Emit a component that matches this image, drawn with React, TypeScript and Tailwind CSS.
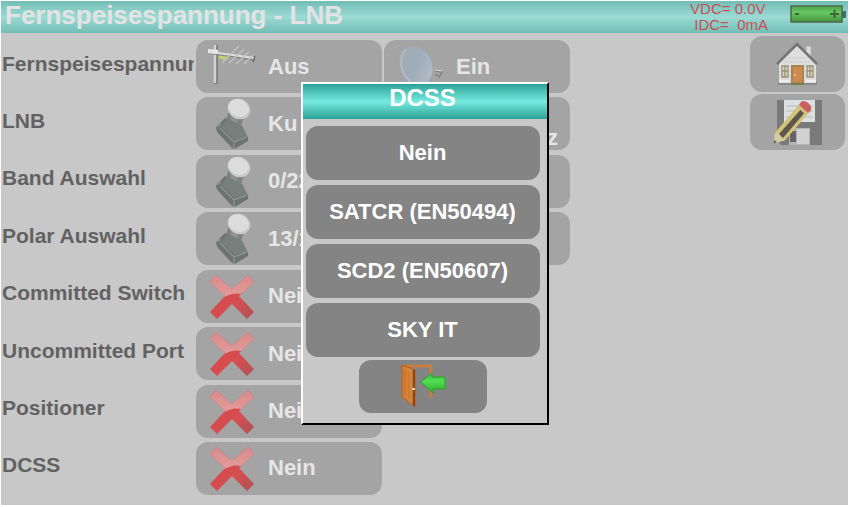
import React from "react";

type IconName = "antenna" | "dish" | "lnb" | "cross";

interface Choice {
  icon?: IconName;
  text: string;
  corner?: boolean;
}

interface SettingRow {
  label: string;
  choices: Choice[];
}

const rows: SettingRow[] = [
  { label: "Fernspeisespannung", choices: [{ icon: "antenna", text: "Aus" }, { icon: "dish", text: "Ein" }] },
  { label: "LNB", choices: [{ icon: "lnb", text: "Ku" }, { text: "GHz", corner: true }] },
  { label: "Band Auswahl", choices: [{ icon: "lnb", text: "0/22" }, { text: "" }] },
  { label: "Polar Auswahl", choices: [{ icon: "lnb", text: "13/18" }, { text: "" }] },
  { label: "Committed Switch", choices: [{ icon: "cross", text: "Nein" }] },
  { label: "Uncommitted Port", choices: [{ icon: "cross", text: "Nein" }] },
  { label: "Positioner", choices: [{ icon: "cross", text: "Nein" }] },
  { label: "DCSS", choices: [{ icon: "cross", text: "Nein" }] },
];

const dcssOptions = ["Nein", "SATCR (EN50494)", "SCD2 (EN50607)", "SKY IT"];

const AntennaIcon = () => (
  <svg className="h-[53px] w-[72px]" viewBox="0 0 72 53" fill="none">
    <path d="M20 5V44" stroke="#7c7c7c" strokeWidth="4" />
    <path d="M19 5V43" stroke="#d4d4d4" strokeWidth="2.4" />
    <path d="M24 14L32 16L28 20L22 18Z" fill="#c9cc62" />
    <path d="M14 13L59 20" stroke="#8a8a8a" strokeWidth="2" />
    <path d="M14 12L59 18" stroke="#dedede" strokeWidth="2" />
    <path d="M12 11L22 12" stroke="#e4e6ea" strokeWidth="4" />
    <path d="M43 6L26 23M48 9L33 23M53 12L40 24M57 15L48 24" stroke="#c4c4c4" strokeWidth="1.2" />
    <path d="M59 16L57 22" stroke="#6e6e6e" strokeWidth="1.6" />
  </svg>
);

const DishIcon = () => (
  <svg className="h-[53px] w-[72px]" viewBox="0 0 72 53" fill="none">
    <defs>
      <linearGradient id="dish" x1="0" y1="0" x2="1" y2="1">
        <stop offset="0" stopColor="#a3adb6" />
        <stop offset=".5" stopColor="#9facba" />
        <stop offset="1" stopColor="#b9c1ce" />
      </linearGradient>
    </defs>
    <ellipse cx="32" cy="26" rx="16" ry="20" transform="rotate(-20 32 26)" fill="url(#dish)" />
    <path d="M22 9C13 17 16 36 31 45" stroke="#bcc3ca" strokeWidth="1.2" />
    <path d="M51 31L58 32L55 38M51 35L55 36" stroke="#808488" strokeWidth="1.4" />
    <path d="M51 30L58 31" stroke="#d9dcdf" strokeWidth="1.2" />
    <path d="M32 46L52 43" stroke="#c6c9cc" strokeWidth="1.5" />
  </svg>
);

const LnbIcon = () => (
  <svg className="h-[53px] w-[72px]" viewBox="0 0 72 53" fill="none">
    <path d="M33 14L29 26L44 32L48 20Z" fill="#7d8180" />
    <path d="M36 18L33 27L40 29L43 20Z" fill="#8d9190" />
    <path d="M29 21L20 30Q20 34 23 37L35 50Q38 53 42 50L52 44Q53 41 50 37L46 29Z" fill="#6c7472" />
    <path d="M31 22L25 30L39 43L51 39L46 29Z" fill="#777f7d" />
    <path d="M24 31L38 45L51 40" stroke="#8c9492" strokeWidth="1.4" />
    <path d="M38 46V51M21 30L25 27" stroke="#929a98" strokeWidth="1.2" />
    <ellipse cx="43" cy="12" rx="11.500" ry="10" transform="rotate(24 43 12)" fill="#c9cbcb" />
    <ellipse cx="42.500" cy="11" rx="10.500" ry="8.500" transform="rotate(24 42.500 11)" fill="#dcdcdc" />
  </svg>
);

const CrossIcon = () => (
  <svg className="h-[53px] w-[72px]" viewBox="0 0 72 53" fill="none">
    <defs>
      <linearGradient id="crossTop" x1="0" y1="0" x2="0" y2="1">
        <stop offset="0" stopColor="#da8a8a" />
        <stop offset="1" stopColor="#e39c9c" />
      </linearGradient>
      <linearGradient id="crossLow" x1="0" y1="0" x2="1" y2="1">
        <stop offset="0" stopColor="#d8474a" />
        <stop offset=".65" stopColor="#d54e50" />
        <stop offset="1" stopColor="#a85456" />
      </linearGradient>
    </defs>
    <path d="M20 5L36 19L52 5L58 12L43 26L58 42L51 49L36 34L21 49L14 42L29 26L14 12Z" fill="url(#crossLow)" />
    <path d="M20 5L36 19L52 5L58 12L45 24Q36 22 27 28L29 26L14 12Z" fill="url(#crossTop)" />
  </svg>
);

const HouseIcon = () => (
  <svg className="h-[50px] w-[50px]" viewBox="0 0 50 50" fill="none">
    <path d="M33 7H38V19L33 14Z" fill="#dadada" stroke="#b0b0b0" />
    <path d="M5 43H44V46H5Z" fill="#8a8a8a" />
    <path d="M6 24L24 7L43 24V44H6Z" fill="#dedede" />
    <path d="M14 19H34M11 23H38M8 27H42M7 32H42M7 37H42" stroke="#cdcdcd" />
    <path d="M4 25L24 5L44 25" stroke="#747474" strokeWidth="2.600" />
    <path d="M18 26H31V45H18Z" fill="#a98352" />
    <path d="M20 28H29V43H20Z" fill="#cc8a50" />
    <circle cx="22" cy="36" r="1" fill="#ead28c" />
    <path d="M18 45H31" stroke="#72804e" strokeWidth="2" />
    <path d="M9 27H15V38H9ZM34 27H40V38H34ZM12 27V38M37 27V38M9 32H15M34 32H40" fill="#d8d4bb" stroke="#98917a" strokeWidth="1.300" />
    <path d="M6 42H16M33 42H43" stroke="#eeeeee" strokeWidth="2" />
  </svg>
);

const SaveIcon = () => (
  <svg className="h-[53px] w-[50px]" viewBox="0 0 50 53" fill="none">
    <path d="M4 4H49V49H8L4 45Z" fill="#7a7a7a" />
    <path d="M11 4H42V26H11Z" fill="#dde0e3" />
    <path d="M13 10H40M13 15H40M13 21H40" stroke="#b4bac4" />
    <path d="M16 32H37V49H16Z" fill="#b5b5b5" />
    <path d="M17 35H23V46H17Z" fill="#656565" />
    <path d="M24 33H36V48H24Z" fill="#d2d2d2" />
    <path d="M1 47L2 37L28 6L38 14L12 44Z" fill="#d6c875" />
    <path d="M3 36L27 8L38 14L12 44L8 45Z" fill="#d3c479" />
    <path d="M6 38L30 11L34 14L10 42Z" fill="#5d584c" />
    <path d="M28 6C30 3 40 8 38 14L35 17L26 9Z" fill="#cc6060" />
    <path d="M26 9L35 17L33 19L24 11Z" fill="#d8bd80" />
    <path d="M2 37L6 38L8 42L12 44L1 48Z" fill="#d8c9a5" />
    <path d="M1 44L4 46L1 48Z" fill="#606060" />
  </svg>
);

const BatteryIcon = () => (
  <svg className="h-[18px] w-[56px]" viewBox="0 0 56 18" fill="none">
    <defs>
      <linearGradient id="battery" x1="0" y1="0" x2="0" y2="1">
        <stop offset="0" stopColor="#4fa348" />
        <stop offset=".4" stopColor="#67c761" />
        <stop offset="1" stopColor="#459440" />
      </linearGradient>
    </defs>
    <rect x="1" y="1" width="51" height="16" fill="url(#battery)" stroke="#4c6a4c" strokeWidth="1.500" />
    <path d="M52 6H56V13H52Z" fill="#4a6864" />
    <path d="M5 9H9M40 9H49M44.500 5V13" stroke="#3c673b" strokeWidth="2" />
  </svg>
);

const ExitIcon = () => (
  <svg className="h-[44px] w-[46px]" viewBox="0 0 46 44" fill="none">
    <defs>
      <linearGradient id="door" x1="0" y1="0" x2="1" y2="0">
        <stop offset="0" stopColor="#d57a2e" />
        <stop offset=".7" stopColor="#d9873f" />
        <stop offset="1" stopColor="#9c4e14" />
      </linearGradient>
      <linearGradient id="arrow" x1="0" y1="0" x2="0" y2="1">
        <stop offset="0" stopColor="#35b53a" />
        <stop offset=".4" stopColor="#52e052" />
        <stop offset="1" stopColor="#26ac2d" />
      </linearGradient>
    </defs>
    <path d="M3 2H31V34" stroke="#d17b34" strokeWidth="2.500" />
    <path d="M2 1L15 6V43L2 33Z" fill="url(#door)" stroke="#b0601f" />
    <path d="M5 6V31M9 8V35" stroke="#c06c26" strokeWidth=".8" />
    <path d="M14 6V42" stroke="#7d3f10" strokeWidth="1.500" />
    <path d="M12 25H15" stroke="#e6d5a8" strokeWidth="2" />
    <path d="M21 18L32 9V13H45V25H33V29Z" fill="url(#arrow)" stroke="#2ba331" />
  </svg>
);

const icons: Record<IconName, () => React.ReactElement> = {
  antenna: AntennaIcon,
  dish: DishIcon,
  lnb: LnbIcon,
  cross: CrossIcon,
};

const ChoiceButton = ({ choice, label }: { choice: Choice; label: string }) => {
  const Icon = choice.icon ? icons[choice.icon] : null;

  return (
    <button
      type="button"
      aria-label={choice.text ? undefined : label}
      className={`flex h-[53px] w-[186px] rounded-xl bg-[#a4a4a4] text-[22px] leading-6 text-[#e6e6e6] ${
        choice.corner ? "items-end justify-end px-3" : "items-center"
      }`}
    >
      {Icon && <Icon />}
      <span>{choice.text}</span>
    </button>
  );
};

const DcssDialog = () => (
  <div className="absolute inset-0 flex items-center justify-center">
    <div
      role="dialog"
      aria-labelledby="dcss-title"
      className="w-[248px] border-2 border-t-white border-r-black border-b-black border-l-white bg-[#c8c8c8]"
    >
      <h2
        id="dcss-title"
        className="h-[35px] bg-linear-to-b from-[#2aa298] via-[#76eae0] to-[#2aa298] pr-1 text-center text-2xl leading-7 font-bold text-white"
      >
        DCSS
      </h2>
      <div className="flex flex-col items-center pt-[7px] pr-[7px] pb-[10px] pl-[3px]">
        <div className="flex w-full flex-col gap-[5px]">
          {dcssOptions.map((option) => (
            <button key={option} type="button" className="h-[54px] rounded-xl bg-[#848484] text-[22px] text-white">
              {option}
            </button>
          ))}
        </div>
        <button
          type="button"
          aria-label="Zurück"
          className="mt-[3px] flex h-[53px] w-32 items-center justify-center rounded-xl bg-[#848484]"
        >
          <ExitIcon />
        </button>
      </div>
    </div>
  </div>
);

const App = () => {
  return (
    <div className="relative flex min-h-screen flex-col border-t border-r-2 border-b-2 border-l border-white bg-[#c8c8c8] font-['Liberation_Sans',sans-serif] font-bold">
      <header className="flex h-8 items-center justify-between bg-linear-to-b from-[#72bdb5] via-[#9bdbd4] to-[#72bdb5] pr-[2px] pl-1">
        <h1 className="pb-1 text-[26px] leading-7 text-[#e3e3e3]">Fernspeisespannung - LNB</h1>
        <div className="flex items-start gap-[22px]">
          <div className="text-[15px] leading-4 font-normal whitespace-pre text-[#c94f55]">
            <p>VDC= 0.0V</p>
            <p> IDC=  0mA</p>
          </div>
          <div className="pt-1">
            <BatteryIcon />
          </div>
        </div>
      </header>

      <div className="flex grow justify-between pr-[3px]">
        <main className="flex flex-col justify-between pt-[7px] pb-[10px]">
          {rows.map((row) => (
            <div key={row.label} className="flex items-center gap-[2px]">
              <div className="w-[193px] overflow-hidden pb-[6px] pl-px text-[21px] leading-7 whitespace-nowrap text-[#626262]">
                {row.label}
              </div>
              {row.choices.map((choice, i) => (
                <ChoiceButton key={i} choice={choice} label={row.label} />
              ))}
            </div>
          ))}
        </main>
        <aside className="flex flex-col gap-[2px] pt-[3px]">
          <button type="button" aria-label="Home" className="flex h-14 w-[95px] items-center justify-center rounded-xl bg-[#a4a4a4]">
            <HouseIcon />
          </button>
          <button type="button" aria-label="Speichern" className="flex h-14 w-[95px] items-center justify-center rounded-xl bg-[#a4a4a4]">
            <SaveIcon />
          </button>
        </aside>
      </div>

      <DcssDialog />
    </div>
  );
};

export default App;
